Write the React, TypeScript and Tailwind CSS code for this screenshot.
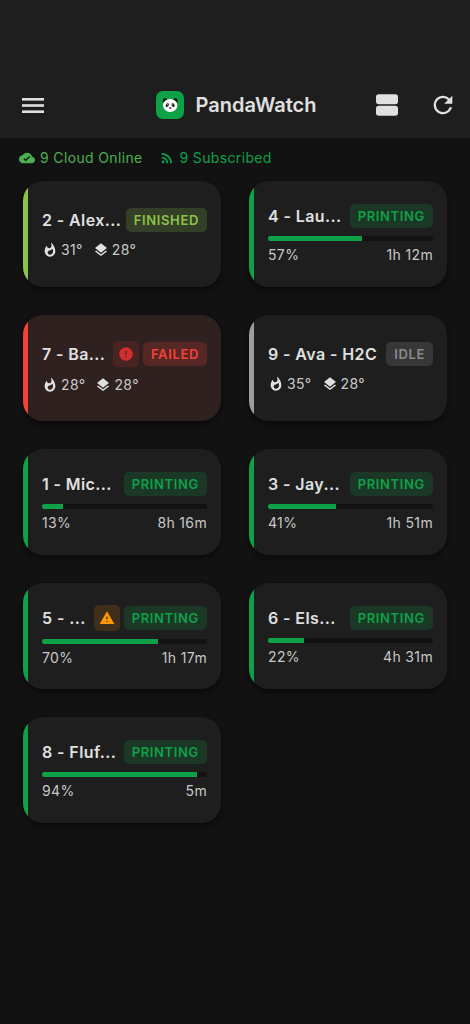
import React from 'react';
import clsx from 'clsx';
import {
  MdCloudDone,
  MdError,
  MdLayers,
  MdRefresh,
  MdRssFeed,
  MdWarning,
  MdWhatshot,
} from 'react-icons/md';

type Status = 'FINISHED' | 'PRINTING' | 'FAILED' | 'IDLE';

interface Printer {
  name: string;
  status: Status;
  alert?: 'error' | 'warning';
  progress?: number;
  remaining?: string;
  nozzle?: number;
  bed?: number;
}

const printers: Printer[] = [
  { name: '2 - Alex...', status: 'FINISHED', nozzle: 31, bed: 28 },
  { name: '4 - Lau...', status: 'PRINTING', progress: 57, remaining: '1h 12m' },
  { name: '7 - Ba...', status: 'FAILED', alert: 'error', nozzle: 28, bed: 28 },
  { name: '9 - Ava - H2C', status: 'IDLE', nozzle: 35, bed: 28 },
  { name: '1 - Mic...', status: 'PRINTING', progress: 13, remaining: '8h 16m' },
  { name: '3 - Jay...', status: 'PRINTING', progress: 41, remaining: '1h 51m' },
  { name: '5 - ...', status: 'PRINTING', alert: 'warning', progress: 70, remaining: '1h 17m' },
  { name: '6 - Els...', status: 'PRINTING', progress: 22, remaining: '4h 31m' },
  { name: '8 - Fluf...', status: 'PRINTING', progress: 94, remaining: '5m' },
];

const cardStyles: Record<Status, string> = {
  FINISHED: 'bg-[#1e1e1e] before:bg-[#8bc34a]',
  PRINTING: 'bg-[#1e1e1e] before:bg-[#0ea147]',
  FAILED: 'bg-[#2f2120] before:bg-[#f44336]',
  IDLE: 'bg-[#1e1e1e] before:bg-[#9e9e9e]',
};

const badgeStyles: Record<Status, string> = {
  FINISHED: 'bg-[#343f27] text-[#8bc34a]',
  PRINTING: 'bg-[#1b3826] text-[#0ea147]',
  FAILED: 'bg-[#562725] text-[#f44336]',
  IDLE: 'bg-[#373737] text-[#8a8a8a]',
};

function PandaLogo() {
  return (
    <svg viewBox="0 0 28 28" className="size-7 rounded-[7px] bg-[#0ea147]" aria-hidden="true">
      <circle cx="9.2" cy="9.8" r="2.5" fill="#111" />
      <circle cx="19.2" cy="9.8" r="2.5" fill="#111" />
      <ellipse cx="14.2" cy="14.4" rx="7.2" ry="6.5" fill="#fff" />
      <ellipse cx="11.3" cy="14.1" rx="1.4" ry="2" transform="rotate(28 11.3 14.1)" fill="#111" />
      <ellipse cx="17.1" cy="14.1" rx="1.4" ry="2" transform="rotate(-28 17.1 14.1)" fill="#111" />
      <circle cx="11.6" cy="13.7" r=".5" fill="#fff" />
      <circle cx="16.8" cy="13.7" r=".5" fill="#fff" />
      <ellipse cx="14.2" cy="17" rx="1.3" ry=".8" fill="#111" />
    </svg>
  );
}

function Header() {
  return (
    <header className="bg-[#1e1e1e] pt-[73px] pb-px text-[#e0e0e0]">
      <div className="grid h-16 grid-cols-[1fr_auto_1fr] items-center pr-[7px] pl-[9px]">
        <button type="button" aria-label="Menu" className="flex size-12 items-center justify-center">
          <svg viewBox="0 0 22 15" className="h-[15px] w-[22px]" fill="currentColor" aria-hidden="true">
            <rect width="22" height="2.6" />
            <rect y="6.2" width="22" height="2.6" />
            <rect y="12.4" width="22" height="2.6" />
          </svg>
        </button>
        <div className="flex items-center gap-3">
          <PandaLogo />
          <h1 className="text-xl font-semibold">PandaWatch</h1>
        </div>
        <div className="flex items-center justify-end gap-2">
          <button type="button" aria-label="Change layout" className="flex size-12 items-center justify-center">
            <svg viewBox="0 0 22 22" className="size-[22px]" fill="currentColor" aria-hidden="true">
              <rect y=".2" width="22" height="10.1" rx="2.8" />
              <rect y="11.7" width="22" height="10.1" rx="2.8" />
            </svg>
          </button>
          <button type="button" aria-label="Refresh" className="-mr-1 flex size-12 items-center justify-center">
            <MdRefresh className="size-7" />
          </button>
        </div>
      </div>
    </header>
  );
}

function AlertIcon({ kind }: { kind: 'error' | 'warning' }) {
  return (
    <span
      className={clsx(
        'flex size-[26px] shrink-0 items-center justify-center rounded-[5px]',
        kind === 'error' ? 'bg-[#482321] text-[#d32f2f]' : 'bg-[#3f2f1a] text-[#ff9800]',
      )}
    >
      {kind === 'error' ? <MdError className="size-4" /> : <MdWarning className="size-4" />}
    </span>
  );
}

function PrinterCard({ printer }: { printer: Printer }) {
  const { name, status, alert, progress, remaining, nozzle, bed } = printer;
  return (
    <article
      className={clsx(
        'flex h-[106px] overflow-hidden rounded-[20px] shadow-md shadow-black/40 before:w-[5px] before:shrink-0',
        cardStyles[status],
      )}
    >
      <div className="flex min-w-0 flex-1 flex-col justify-center px-3.5">
        <div className="flex items-center justify-between gap-1">
          <h2 className="truncate text-base font-semibold tracking-wide">{name}</h2>
          <div className="flex shrink-0 items-center gap-1">
            {alert && <AlertIcon kind={alert} />}
            <span
              className={clsx(
                'h-6 rounded-[5px] px-2 text-[13px] leading-6 font-semibold tracking-wider',
                badgeStyles[status],
              )}
            >
              {status}
            </span>
          </div>
        </div>
        {progress !== undefined ? (
          <>
            <div className="mt-2 h-[5px] overflow-hidden rounded-xs bg-[#121212]">
              <div className="h-full bg-[#0ea147]" style={{ width: `${progress}%` }} />
            </div>
            <div className="mt-1 flex justify-between text-sm tracking-wide text-[#c8c8c8]">
              <span>{progress}%</span>
              <span>{remaining}</span>
            </div>
          </>
        ) : (
          <div className="mt-2 flex items-center gap-2.5 text-sm tracking-wide text-[#c8c8c8]">
            <span className="flex items-center gap-[3px]">
              <MdWhatshot className="size-4 text-[#e0e0e0]" />
              {nozzle}°
            </span>
            <span className="flex items-center gap-[3px]">
              <MdLayers className="size-4 text-[#e0e0e0]" />
              {bed}°
            </span>
          </div>
        )}
      </div>
    </article>
  );
}

export default function App() {
  return (
    <div className="min-h-screen bg-[#121212] font-['Inter',sans-serif] text-[#e0e0e0]">
      <Header />
      <div className="flex h-10 items-center gap-4 px-[19px] text-sm tracking-wide">
        <span className="flex items-center gap-[5px] text-[#4caf50]">
          <MdCloudDone className="size-4" />9 Cloud Online
        </span>
        <span className="flex items-center gap-[5px] text-[#0ea147]">
          <MdRssFeed className="size-4" />9 Subscribed
        </span>
      </div>
      <main className="grid grid-cols-2 gap-7 px-[23px] pt-[3px] pb-6">
        {printers.map((printer) => (
          <PrinterCard key={printer.name} printer={printer} />
        ))}
      </main>
    </div>
  );
}
